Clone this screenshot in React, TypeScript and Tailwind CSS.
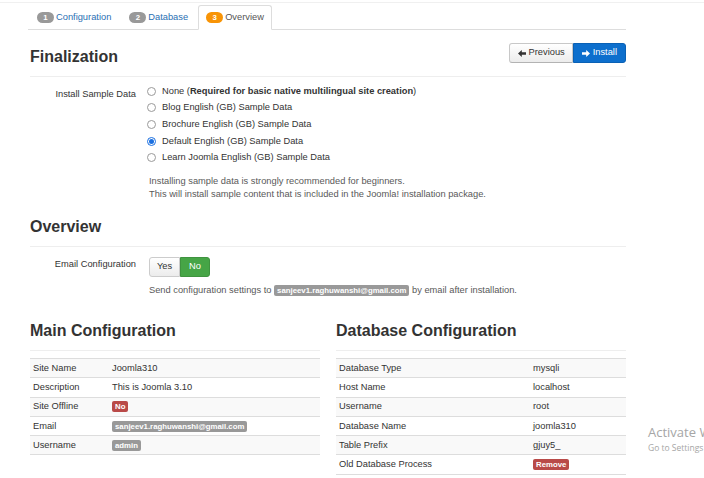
import React from "react";

function Badge({ n, color }: { n: string; color: string }) {
  return (
    <span
      className={`inline-flex h-[11px] min-w-[17px] items-center justify-center rounded-full px-[5px] text-[7.8px] font-bold leading-[11px] text-white ${color}`}
    >
      {n}
    </span>
  );
}

function Label({ children, red }: { children: React.ReactNode; red?: boolean }) {
  return (
    <span
      className={`inline-block rounded-[2px] px-[3px] py-[1px] text-[7.8px] font-bold leading-[9px] text-white ${
        red ? "bg-[#b94a48]" : "bg-[#999999]"
      }`}
    >
      {children}
    </span>
  );
}

function ArrowLeft() {
  return (
    <svg width="8" height="7" viewBox="0 0 8 7" className="shrink-0">
      <path d="M0 3.5 L3.8 0 V2.3 H8 V4.7 H3.8 V7 Z" fill="currentColor" />
    </svg>
  );
}

function ArrowRight() {
  return (
    <svg width="8" height="7" viewBox="0 0 8 7" className="shrink-0">
      <path d="M8 3.5 L4.2 0 V2.3 H0 V4.7 H4.2 V7 Z" fill="currentColor" />
    </svg>
  );
}

function Radio({ checked, children }: { checked?: boolean; children: React.ReactNode }) {
  return (
    <div className="flex h-[16.6px] items-center">
      {checked ? (
        <span className="flex h-[9px] w-[9px] items-center justify-center rounded-full border border-[#1a6fe0] bg-white">
          <span className="h-[5px] w-[5px] rounded-full bg-[#1a6fe0]" />
        </span>
      ) : (
        <span className="h-[9px] w-[9px] rounded-full border border-[#9a9a9a] bg-white" />
      )}
      <span className="ml-[6px] leading-[13px]">{children}</span>
    </div>
  );
}

function Heading({ children }: { children: React.ReactNode }) {
  return (
    <h3 className="pb-[9px] text-[16px] font-bold leading-[20px] text-[#333] border-b border-[#eeeeee]">
      {children}
    </h3>
  );
}

function Table({
  rows,
  labelWidth,
}: {
  rows: [string, React.ReactNode][];
  labelWidth: string;
}) {
  return (
    <div className="mt-[7px] border-b border-[#dddddd]">
      {rows.map(([k, v], i) => (
        <div
          key={k}
          className={`flex h-[19.3px] items-center border-t border-[#dddddd] ${
            i % 2 === 0 ? "bg-[#f9f9f9]" : "bg-white"
          }`}
        >
          <div className={`${labelWidth} shrink-0 pl-[3px] leading-[13px]`}>{k}</div>
          <div className="leading-[13px]">{v}</div>
        </div>
      ))}
    </div>
  );
}

export default function App() {
  return (
    <div className="relative h-[478px] w-[704px] overflow-hidden bg-white font-['Liberation_Sans',Arial,sans-serif] text-[9.3px] text-[#333]">
      <div className="h-[2px]" />
      <div className="border-t border-[#f0f0f0]" />
      <div className="ml-[30px] w-[596px]">
        {/* Tabs */}
        <div className="-ml-[2px] flex h-[27px] items-end gap-[2px] border-b border-[#dddddd] pl-[1px]">
          <div className="-mb-px flex h-[25px] items-center gap-[2px] border border-transparent px-[7px]">
            <Badge n="1" color="bg-[#999999]" />
            <span className="text-[#2a6fb3]">Configuration</span>
          </div>
          <div className="-mb-px flex h-[25px] items-center gap-[2px] border border-transparent px-[7px]">
            <Badge n="2" color="bg-[#999999]" />
            <span className="text-[#2a6fb3]">Database</span>
          </div>
          <div className="-mb-px flex h-[25px] items-center gap-[2px] rounded-t-[3px] border border-[#dddddd] border-b-transparent bg-white px-[7px]">
            <Badge n="3" color="bg-[#f89406]" />
            <span className="text-[#555555]">Overview</span>
          </div>
        </div>

        {/* Finalization header */}
        <div className="flex items-start justify-between border-b border-[#eeeeee] pb-[9px] pt-[13px]">
          <h3 className="mt-[4px] text-[16px] font-bold leading-[20px]">Finalization</h3>
          <div className="flex h-[20px]">
            <button className="flex h-[20px] items-center gap-[3px] rounded-l-[3px] border border-[#c8c8c8] border-b-[#b3b3b3] bg-gradient-to-b from-white to-[#ececec] pl-[8px] pr-[7px] text-[#333]">
              <ArrowLeft />
              <span>Previous</span>
            </button>
            <button className="flex h-[20px] items-center gap-[3px] rounded-r-[3px] border border-[#0a61b5] bg-[#0d6fcd] pl-[8px] pr-[8px] text-white">
              <ArrowRight />
              <span>Install</span>
            </button>
          </div>
        </div>

        {/* Install sample data */}
        <div className="flex pt-[6px]">
          <div className="w-[106px] shrink-0 pt-[5px] text-right leading-[13px]">Install Sample Data</div>
          <div className="ml-[11px]">
            <Radio>
              None (<b>Required for basic native multilingual site creation</b>)
            </Radio>
            <Radio>Blog English (GB) Sample Data</Radio>
            <Radio>Brochure English (GB) Sample Data</Radio>
            <Radio checked>Default English (GB) Sample Data</Radio>
            <Radio>Learn Joomla English (GB) Sample Data</Radio>
            <div className="mt-[9px] pl-[2px] leading-[13px] text-[#595959]">
              <p>Installing sample data is strongly recommended for beginners.</p>
              <p>This will install sample content that is included in the Joomla! installation package.</p>
            </div>
          </div>
        </div>

        {/* Overview */}
        <div className="mt-[16px]">
          <Heading>Overview</Heading>
        </div>
        <div className="mt-[10px] flex">
          <div className="w-[106px] shrink-0 pt-[1px] text-right leading-[13px]">Email Configuration</div>
          <div className="ml-[13px]">
            <div className="flex h-[20px]">
              <div className="flex h-[20px] w-[31px] items-center justify-center rounded-l-[3px] border border-[#cccccc] bg-gradient-to-b from-white to-[#ececec] text-[#333]">
                Yes
              </div>
              <div className="flex h-[20px] w-[30px] items-center justify-center rounded-r-[3px] border border-[#3f933f] bg-[#46a546] text-white">
                No
              </div>
            </div>
            <div className="mt-[7px] leading-[13px] text-[#595959]">
              Send configuration settings to <Label>sanjeev1.raghuwanshi@gmail.com</Label> by email after
              installation.
            </div>
          </div>
        </div>

        {/* Configurations */}
        <div className="mt-[24px] grid grid-cols-2 gap-x-[16px]">
          <div>
            <Heading>Main Configuration</Heading>
            <Table
              labelWidth="w-[82px]"
              rows={[
                ["Site Name", "Joomla310"],
                ["Description", "This is Joomla 3.10"],
                ["Site Offline", <Label red>No</Label>],
                ["Email", <Label>sanjeev1.raghuwanshi@gmail.com</Label>],
                ["Username", <Label>admin</Label>],
              ]}
            />
          </div>
          <div>
            <Heading>Database Configuration</Heading>
            <Table
              labelWidth="w-[197px]"
              rows={[
                ["Database Type", "mysqli"],
                ["Host Name", "localhost"],
                ["Username", "root"],
                ["Database Name", "joomla310"],
                ["Table Prefix", "gjuy5_"],
                ["Old Database Process", <Label red>Remove</Label>],
              ]}
            />
          </div>
        </div>
      </div>

      {/* Windows watermark */}
      <div className="pointer-events-none absolute left-[648px] top-[424px] whitespace-nowrap font-['Open_Sans',sans-serif] text-[#a6a6a6]">
        <div className="text-[13px] leading-[17px]">Activate Windows</div>
        <div className="mt-[1px] text-[8.5px] leading-[11px]">Go to Settings to activate Windows.</div>
      </div>
    </div>
  );
}
